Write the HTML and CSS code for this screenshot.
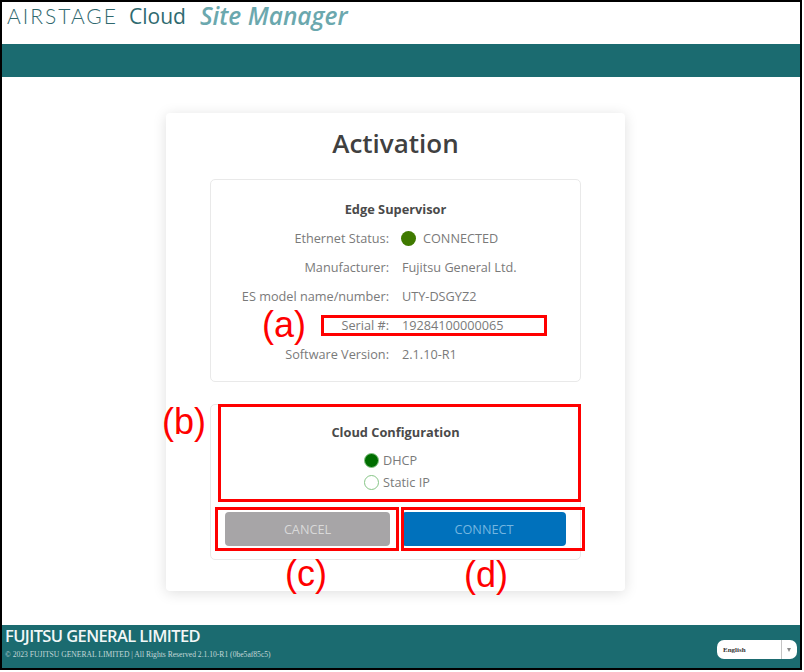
FILE: index.html
```html
<!DOCTYPE html>
<html>
<head>
    <link rel="stylesheet" href="styles.css">
</head>
<body>
    <div class="frame">
        <div class="header">
            <span class="logo-brand">AIRSTAGE</span>
            <span class="logo-cloud">Cloud</span>
            <span class="logo-site">Site Manager</span>
        </div>
        <div class="nav-bar"></div>

        <div class="main">
            <div class="card">
                <h1 class="card-title">Activation</h1>

                <div class="panel panel-info">
                    <div class="panel-title">Edge Supervisor</div>
                    <div class="info-row">
                        <div class="info-label">Ethernet Status:</div>
                        <div class="info-value"><span class="status-dot"></span>CONNECTED</div>
                    </div>
                    <div class="info-row">
                        <div class="info-label">Manufacturer:</div>
                        <div class="info-value">Fujitsu General Ltd.</div>
                    </div>
                    <div class="info-row">
                        <div class="info-label">ES model name/number:</div>
                        <div class="info-value">UTY-DSGYZ2</div>
                    </div>
                    <div class="info-row">
                        <div class="info-label">Serial #:</div>
                        <div class="info-value">19284100000065</div>
                    </div>
                    <div class="info-row">
                        <div class="info-label">Software Version:</div>
                        <div class="info-value">2.1.10-R1</div>
                    </div>
                </div>

                <div class="panel panel-cloud">
                    <div class="panel-title">Cloud Configuration</div>
                    <div class="radio-group">
                        <div class="radio-row"><span class="radio radio-on"></span>DHCP</div>
                        <div class="radio-row"><span class="radio"></span>Static IP</div>
                    </div>
                    <div class="button-row">
                        <div class="btn btn-cancel">CANCEL</div>
                        <div class="btn btn-connect">CONNECT</div>
                    </div>
                </div>
            </div>
        </div>

        <div class="footer">
            <div class="footer-text">
                <div class="footer-brand">FUJITSU GENERAL LIMITED</div>
                <div class="footer-copy">© 2023 FUJITSU GENERAL LIMITED | All Rights Reserved 2.1.10-R1 (0be5af85c5)</div>
            </div>
            <div class="lang-select">
                <span class="lang-name">English</span>
                <span class="lang-arrow"></span>
            </div>
        </div>

        <!-- red callouts drawn over the screen -->
        <div class="callout-box box-a"></div>
        <div class="callout-box box-b"></div>
        <div class="callout-box box-c"></div>
        <div class="callout-box box-d"></div>
        <div class="callout-label label-a">(a)</div>
        <div class="callout-label label-b">(b)</div>
        <div class="callout-label label-c">(c)</div>
        <div class="callout-label label-d">(d)</div>
    </div>
</body>
</html>
```

FILE: styles.css
```css
html, body {
    margin: 0;
    background: #ffffff;
}
.frame {
    position: relative;
    box-sizing: border-box;
    width: 802px;
    height: 670px;
    border: 2px solid #000000;
    display: flex;
    flex-direction: column;
    font-family: "Open Sans", sans-serif;
    background: #ffffff;
}
.header {
    height: 42px;
    display: flex;
    align-items: flex-start;
    padding-left: 5px;
    white-space: nowrap;
}
.logo-brand {
    font-family: Lato, sans-serif;
    font-size: 21px;
    font-weight: 300;
    line-height: 28px;
    letter-spacing: 2px;
    color: #2f686e;
    margin-right: 11px;
}
.logo-cloud {
    font-size: 21px;
    line-height: 28px;
    color: #2f6a70;
    margin-right: 14px;
}
.logo-site {
    font-size: 24.5px;
    line-height: 28px;
    font-style: italic;
    font-weight: 600;
    color: #6ba8ae;
}
.nav-bar {
    height: 33px;
    background: #1b6b70;
}
.main {
    flex: 1;
    padding: 36px 0 0 164px;
}
.card {
    box-sizing: border-box;
    width: 459px;
    height: 478px;
    padding: 12px 44px 0;
    border-radius: 4px;
    background: #ffffff;
    box-shadow: 0 2px 14px rgba(0, 0, 0, 0.13);
}
.card-title {
    margin: 0 0 18px;
    font-size: 26px;
    line-height: 36px;
    font-weight: 600;
    text-align: center;
    color: #404040;
}
.panel {
    box-sizing: border-box;
    border: 1px solid #e9e9e9;
    border-radius: 5px;
}
.panel-info {
    height: 203px;
    padding-top: 19px;
    margin-bottom: 22px;
}
.panel-title {
    font-size: 12.8px;
    line-height: 20px;
    font-weight: 700;
    text-align: center;
    color: #4a4a4a;
}
.info-row {
    display: flex;
    height: 28.8px;
    align-items: center;
    font-size: 12.7px;
    color: #7a7a7a;
}
.panel-info .panel-title {
    margin-bottom: 5px;
}
.info-label {
    width: 178px;
    text-align: right;
}
.info-value {
    display: flex;
    align-items: center;
    margin-left: 13px;
}
.status-dot {
    width: 15px;
    height: 15px;
    border-radius: 50%;
    background: #3f7a00;
    margin: 0 7px 0 -1px;
}
.panel-cloud {
    height: 156px;
    padding-top: 17px;
}
.radio-group {
    margin: 7px 0 0 153px;
}
.radio-row {
    display: flex;
    align-items: center;
    height: 22px;
    font-size: 12.7px;
    color: #7a7a7a;
}
.radio {
    box-sizing: border-box;
    width: 15px;
    height: 15px;
    margin-right: 4px;
    border: 1.5px solid #86c586;
    border-radius: 50%;
    background: #ffffff;
}
.radio-on {
    background: #006e00;
}
.button-row {
    display: flex;
    gap: 12px;
    margin: 19px 0 0 14px;
}
.btn {
    height: 34px;
    border-radius: 4px;
    font-size: 12.7px;
    line-height: 34px;
    text-align: center;
}
.btn-cancel {
    width: 165px;
    background: #a7a5a7;
    color: #d9d9d9;
}
.btn-connect {
    width: 164px;
    background: #0071bc;
    color: #74b6e0;
}
.footer {
    height: 43px;
    display: flex;
    justify-content: space-between;
    background: #1b6b70;
}
.footer-text {
    padding: 1px 0 0 3px;
}
.footer-brand {
    font-size: 16.5px;
    line-height: 20px;
    font-weight: 600;
    letter-spacing: -0.6px;
    color: #f2f7f7;
    white-space: nowrap;
}
.footer-copy {
    margin-top: 3px;
    font-family: "Liberation Serif", serif;
    font-size: 7.6px;
    line-height: 12px;
    color: #c3d8d8;
    white-space: nowrap;
}
.lang-select {
    box-sizing: border-box;
    display: flex;
    align-items: center;
    justify-content: space-between;
    width: 80px;
    height: 19px;
    margin: 15px 3px 0 0;
    padding-left: 6px;
    border-radius: 7px;
    background: #ffffff;
    font-family: "Liberation Serif", serif;
    font-size: 7px;
    font-weight: 700;
    color: #333333;
}
.lang-arrow {
    position: relative;
    box-sizing: border-box;
    width: 16px;
    height: 19px;
    border-left: 1px solid #c4c4c4;
}
.lang-arrow::after {
    content: "";
    position: absolute;
    left: 5px;
    top: 8px;
    border-left: 2.5px solid transparent;
    border-right: 2.5px solid transparent;
    border-top: 4px solid #8a8a8a;
}
.callout-box {
    position: absolute;
    box-sizing: border-box;
    border: 3px solid #ff0000;
}
.box-a { left: 319px; top: 313px; width: 226px; height: 21px; }
.box-b { left: 216px; top: 402px; width: 363px; height: 98px; }
.box-c { left: 213px; top: 505px; width: 184px; height: 44px; }
.box-d { left: 399px; top: 505px; width: 184px; height: 44px; }
.callout-label {
    position: absolute;
    font-family: "Liberation Sans", sans-serif;
    font-size: 36px;
    line-height: 40px;
    color: #ff0000;
}
.label-a { left: 260px; top: 303px; }
.label-b { left: 160px; top: 400px; }
.label-c { left: 283px; top: 552px; }
.label-d { left: 462px; top: 553px; }
```
